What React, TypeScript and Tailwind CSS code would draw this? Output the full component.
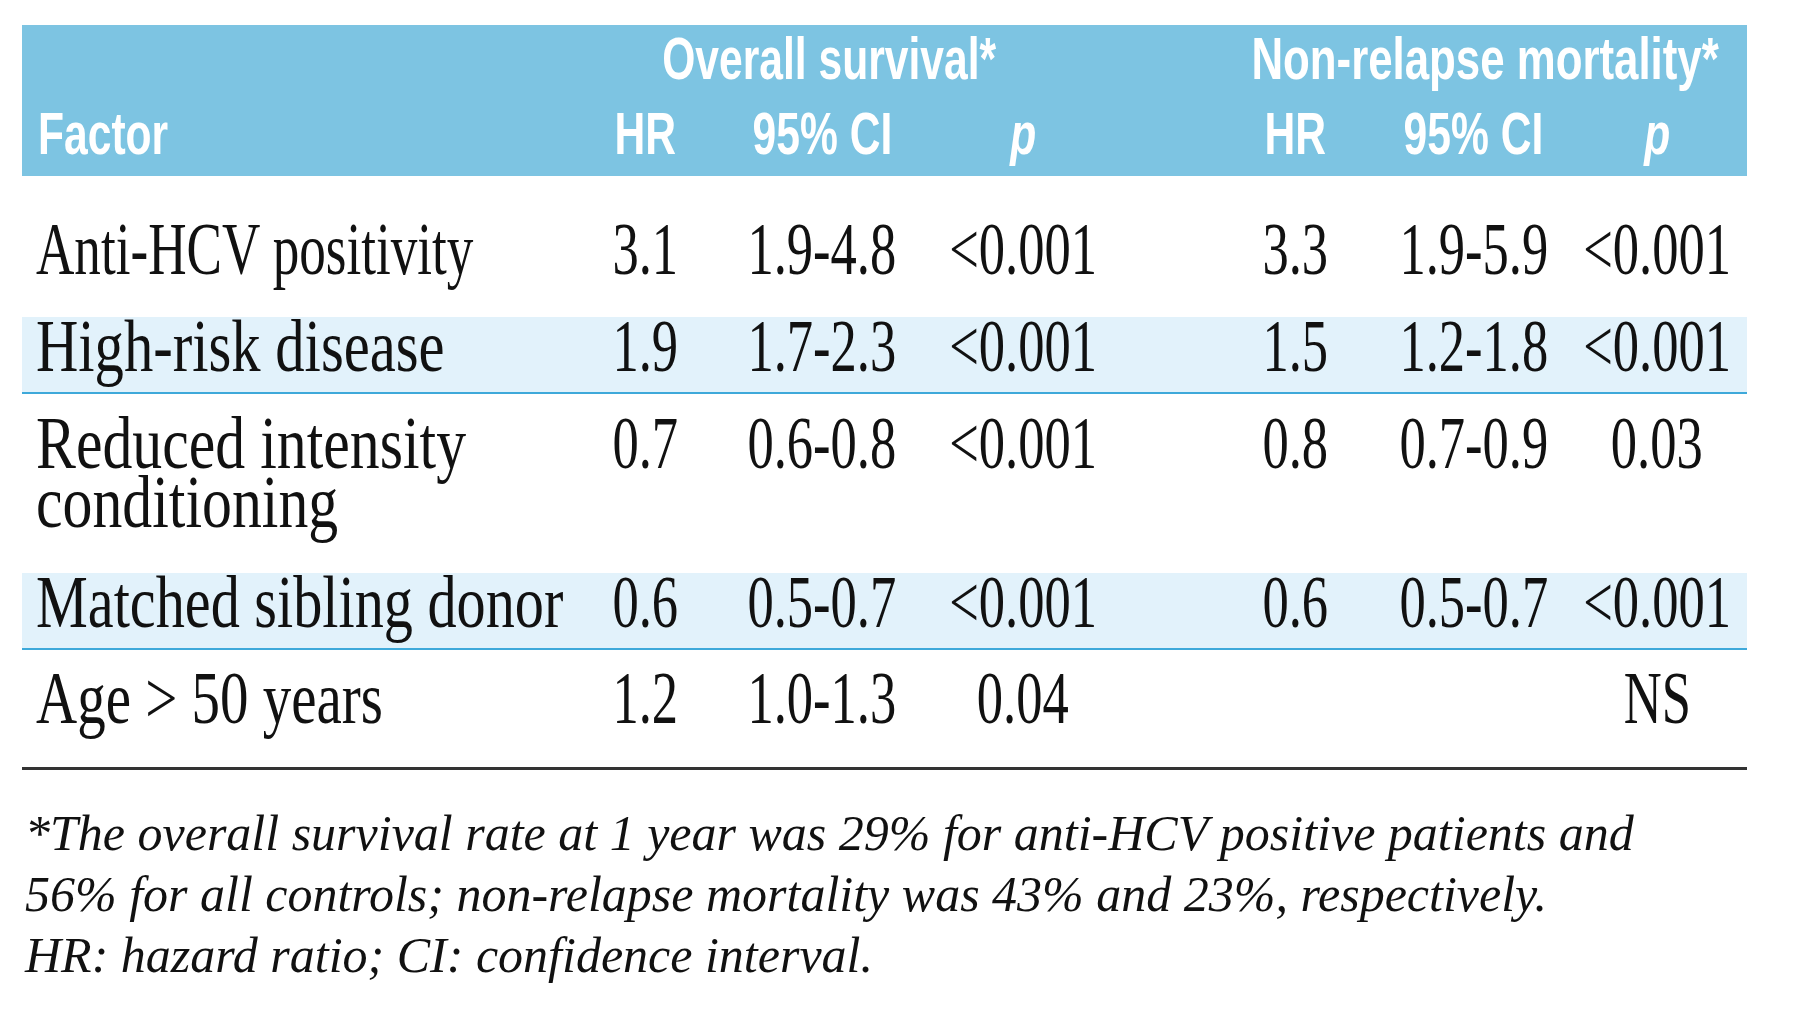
const COLS = "grid grid-cols-[538px_170px_184px_218px_78px_170px_187px_180px]";

interface Row {
  factor: string[];
  os: string[];
  nrm: string[];
  shade: boolean;
  box: string;
  sx: string;
}

const ROWS: Row[] = [
  {
    factor: ["Anti-HCV positivity"],
    os: ["3.1", "1.9-4.8", "<0.001"],
    nrm: ["3.3", "1.9-5.9", "<0.001"],
    shade: false,
    box: "h-[141px] pt-[44px]",
    sx: "scale-x-[0.718]",
  },
  {
    factor: ["High-risk disease"],
    os: ["1.9", "1.7-2.3", "<0.001"],
    nrm: ["1.5", "1.2-1.8", "<0.001"],
    shade: true,
    box: "h-[77px] pt-0",
    sx: "scale-x-[0.792]",
  },
  {
    factor: ["Reduced intensity", "conditioning"],
    os: ["0.7", "0.6-0.8", "<0.001"],
    nrm: ["0.8", "0.7-0.9", "0.03"],
    shade: false,
    box: "h-[179px] pt-[20px]",
    sx: "scale-x-[0.808]",
  },
  {
    factor: ["Matched sibling donor"],
    os: ["0.6", "0.5-0.7", "<0.001"],
    nrm: ["0.6", "0.5-0.7", "<0.001"],
    shade: true,
    box: "h-[77px] pt-0",
    sx: "scale-x-[0.787]",
  },
  {
    factor: ["Age > 50 years"],
    os: ["1.2", "1.0-1.3", "0.04"],
    nrm: ["", "", "NS"],
    shade: false,
    box: "h-[117px] pt-[19px]",
    sx: "scale-x-[0.77]",
  },
];

function Num({ v }: { v: string }) {
  return (
    <div className="flex justify-center">
      <span className="inline-block scale-x-[0.71] whitespace-nowrap">{v}</span>
    </div>
  );
}

function Head({ v, italic }: { v: string; italic?: boolean }) {
  return (
    <div className="flex justify-center">
      <span className={`inline-block scale-x-[0.71] whitespace-nowrap ${italic ? "italic" : ""}`}>{v}</span>
    </div>
  );
}

export default function App() {
  return (
    <div className="min-h-screen w-[1800px] bg-white">
      <div className="ml-[22px] w-[1725px] pt-[25px]">
        {/* header band */}
        <div className="h-[151px] bg-[#7dc4e2] pt-[4px] font-['Liberation_Sans',sans-serif] text-[60px] font-bold leading-[60px] text-white">
          <div className={COLS}>
            <div />
            <div className="col-span-3 flex justify-center pr-[34px]">
              <span className="inline-block scale-x-[0.71] whitespace-nowrap">Overall survival*</span>
            </div>
            <div />
            <div className="col-span-3 flex justify-center pl-[14px]">
              <span className="inline-block scale-x-[0.73] whitespace-nowrap">Non-relapse mortality*</span>
            </div>
          </div>
          <div className={`${COLS} mt-[15px]`}>
            <div className="pl-[16px]">
              <span className="inline-block origin-left scale-x-[0.71]">Factor</span>
            </div>
            <Head v="HR" />
            <Head v="95% CI" />
            <Head v="p" italic />
            <div />
            <Head v="HR" />
            <Head v="95% CI" />
            <Head v="p" italic />
          </div>
        </div>

        {/* body rows */}
        <div className="font-['Liberation_Serif',serif] text-[74px] leading-[59px] text-[#111]">
          {ROWS.map((r) => (
            <div
              key={r.factor[0]}
              className={`${COLS} ${r.box} ${r.shade ? "border-b-2 border-[#3ea9da] bg-[#e2f2fb]" : ""}`}
            >
              <div className="pl-[14px]">
                {r.factor.map((f) => (
                  <div key={f}>
                    <span className={`inline-block origin-left whitespace-nowrap ${r.sx}`}>{f}</span>
                  </div>
                ))}
              </div>
              {r.os.map((v, i) => (
                <Num key={"o" + i} v={v} />
              ))}
              <div />
              {r.nrm.map((v, i) => (
                <Num key={"n" + i} v={v} />
              ))}
            </div>
          ))}
        </div>
        <div className="h-[3px] bg-[#333]" />

        {/* footnote */}
        <div className="mt-[33px] pl-[3px] font-['Liberation_Serif',serif] text-[50px] italic leading-[61px] text-[#111]">
          <div className="whitespace-nowrap">
            *The overall survival rate at 1 year was 29% for anti-HCV positive patients and
          </div>
          <div className="whitespace-nowrap">
            56% for all controls; non-relapse mortality was 43% and 23%, respectively.
          </div>
          <div className="whitespace-nowrap">HR: hazard ratio; CI: confidence interval.</div>
        </div>
      </div>
    </div>
  );
}
